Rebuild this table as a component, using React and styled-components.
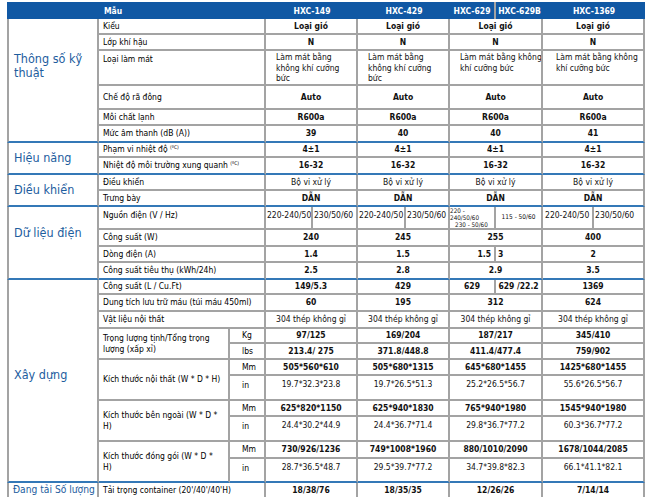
import React from "react";
import styled, { createGlobalStyle } from "styled-components";

const BLUE = "#1058a4";
const LINE = "#a3a3a3";
const SEP = "#3478b7";
const GROUP_TEXT = "#1d5d9e";

const GlobalStyle = createGlobalStyle`
  * { box-sizing: border-box; }
  body {
    margin: 0;
    background: #fff;
    font-family: "DejaVu Sans Condensed", "DejaVu Sans", sans-serif;
    font-stretch: condensed;
  }
`;

const Sheet = styled.table`
  margin: 2px 0 0 7px;
  width: 638px;
  table-layout: fixed;
  border-collapse: separate;
  border-spacing: 0;
  font-size: 8.5px;
  color: #111;
`;

const Row = styled.tr`
  height: ${p => p.$h}px;
  ${p => p.$end && `& > td { border-bottom-color: ${SEP}; }`}
`;

const Head = styled.th`
  background: ${BLUE};
  color: #fff;
  font-weight: bold;
  font-size: 8.5px;
  padding: 0 0 0 ${p => (p.$left ? "5px" : "0")};
  text-align: ${p => (p.$left ? "left" : "center")};
  border-right: ${p => (p.$divider ? `2px solid ${LINE}` : "none")};
  white-space: nowrap;
  overflow: hidden;
`;

const Cell = styled.td`
  border-right: 2px solid ${LINE};
  border-bottom: 2px solid ${LINE};
  padding: 0;
  line-height: 11px;
  white-space: nowrap;
  overflow: hidden;
`;

const Group = styled(Cell)`
  border-left: 2px solid ${LINE};
  border-bottom-color: ${SEP};
  color: ${GROUP_TEXT};
  font-size: ${p => p.$size || 12.5}px;
  line-height: 14px;
  white-space: ${p => (p.$nowrap ? "nowrap" : "normal")};
  padding: 0 0 ${p => p.$lift || 0}px ${p => p.$pl || 5}px;
  vertical-align: middle;
`;

const Label = styled(Cell)`
  color: #000;
  white-space: normal;
  padding: ${p => p.$pt || 0}px 2px 0 4px;
  vertical-align: ${p => (p.$pt ? "top" : "middle")};
  ${p => p.$end && `border-bottom-color: ${SEP};`}
`;

const Unit = styled(Cell)`
  color: #000;
  padding-left: 12px;
  vertical-align: ${p => (p.$pt ? "top" : "middle")};
  padding-top: ${p => p.$pt || 0}px;
`;

const Val = styled(Cell)`
  text-align: ${p => p.$align || "center"};
  font-weight: ${p => (p.$b ? "bold" : "normal")};
  vertical-align: ${p => (p.$pt !== undefined ? "top" : "middle")};
  padding: ${p => p.$pt || 0}px ${p => p.$pr || 0}px 0 ${p => p.$pl || 0}px;
  line-height: ${p => p.$lh || 11}px;
`;

const Tiny = styled.div`
  font-size: 6.3px;
  line-height: 7px;
  padding-left: ${p => p.$indent || 0}px;
`;

const TinyVal = styled(Val)`
  font-size: 6.5px;
`;

const Sup = styled.sup`
  font-size: 5px;
  vertical-align: 3px;
  line-height: 0;
`;

const Four = ({ v, ...rest }) =>
  v.map((x, i) => (
    <Val key={i} colSpan={2} {...rest}>
      {x}
    </Val>
  ));

const widths = [92, 131, 36, 47, 45, 48, 44, 46, 47, 51, 51];

const App = () => {
  return (
    <>
      <GlobalStyle />
      <Sheet>
        <colgroup>
          {widths.map((w, i) => (
            <col key={i} style={{ width: w }} />
          ))}
        </colgroup>
        <tbody>
          <Row $h={17}>
            <Head />
            <Head colSpan={2} $left>
              Mẫu
            </Head>
            <Head colSpan={2}>HXC-149</Head>
            <Head colSpan={2}>HXC-429</Head>
            <Head $divider>HXC-629</Head>
            <Head>HXC-629B</Head>
            <Head colSpan={2}>HXC-1369</Head>
          </Row>

          {/* Thông số kỹ thuật */}
          <Row $h={16}>
            <Group rowSpan={6} $lift={28}>
              Thông số kỹ thuật
            </Group>
            <Label colSpan={2}>Kiểu</Label>
            <Four v={["Loại gió", "Loại gió", "Loại gió", "Loại gió"]} $b />
          </Row>
          <Row $h={16}>
            <Label colSpan={2}>Lớp khí hậu</Label>
            <Four v={["N", "N", "N", "N"]} $b />
          </Row>
          <Row $h={35}>
            <Label colSpan={2} $pt={3}>
              Loại làm mát
            </Label>
            <Val colSpan={2} $align="left" $pl={10} $pt={1} $lh={10.6}>
              Làm mát bằng<br />không khí cưỡng<br />bức
            </Val>
            <Val colSpan={2} $align="left" $pl={10} $pt={1} $lh={10.6}>
              Làm mát bằng<br />không khí cưỡng<br />bức
            </Val>
            <Val colSpan={2} $align="left" $pl={10} $pt={1} $lh={10.6}>
              Làm mát bằng không<br />khí cưỡng bức
            </Val>
            <Val colSpan={2} $align="left" $pl={13} $pt={1} $lh={10.6}>
              Làm mát bằng không<br />khí cưỡng bức
            </Val>
          </Row>
          <Row $h={24}>
            <Label colSpan={2}>Chế độ rã đông</Label>
            <Four v={["Auto", "Auto", "Auto", "Auto"]} $b />
          </Row>
          <Row $h={16}>
            <Label colSpan={2}>Môi chất lạnh</Label>
            <Four v={["R600a", "R600a", "R600a", "R600a"]} $b />
          </Row>
          <Row $h={17} $end>
            <Label colSpan={2}>Mức âm thanh (dB (A))</Label>
            <Four v={["39", "40", "40", "41"]} $b />
          </Row>

          {/* Hiệu năng */}
          <Row $h={15}>
            <Group rowSpan={2}>Hiệu năng</Group>
            <Label colSpan={2}>
              Phạm vi nhiệt độ <Sup>(ºC)</Sup>
            </Label>
            <Four v={["4±1", "4±1", "4±1", "4±1"]} $b />
          </Row>
          <Row $h={17} $end>
            <Label colSpan={2}>
              Nhiệt độ môi trường xung quanh <Sup>(ºC)</Sup>
            </Label>
            <Four v={["16-32", "16-32", "16-32", "16-32"]} $b />
          </Row>

          {/* Điều khiển */}
          <Row $h={16}>
            <Group rowSpan={2}>Điều khiển</Group>
            <Label colSpan={2}>Điều khiển</Label>
            <Four v={["Bộ vi xử lý", "Bộ vi xử lý", "Bộ vi xử lý", "Bộ vi xử lý"]} />
          </Row>
          <Row $h={16} $end>
            <Label colSpan={2}>Trưng bày</Label>
            <Four v={["DẪN", "DẪN", "DẪN", "DẪN"]} $b />
          </Row>

          {/* Dữ liệu điện */}
          <Row $h={21}>
            <Group rowSpan={4} $lift={20}>
              Dữ liệu điện
            </Group>
            <Label colSpan={2} $pt={3}>
              Nguồn điện (V / Hz)
            </Label>
            <Val $align="left" $pl={1} $pt={3}>220-240/50</Val>
            <Val $align="left" $pl={1} $pt={3}>230/50/60</Val>
            <Val $align="left" $pl={1} $pt={3}>220-240/50</Val>
            <Val $align="left" $pl={1} $pt={3}>230/50/60</Val>
            <Val $align="left" $pt={0}>
              <Tiny>220 -</Tiny>
              <Tiny>240/50/60</Tiny>
              <Tiny $indent={5}>230 - 50/60</Tiny>
            </Val>
            <TinyVal $pt={5}>115 - 50/60</TinyVal>
            <Val $align="left" $pl={2} $pt={3}>220-240/50</Val>
            <Val $align="left" $pl={1} $pt={3}>230/50/60</Val>
          </Row>
          <Row $h={17}>
            <Label colSpan={2}>Công suất (W)</Label>
            <Four v={["240", "245", "255", "400"]} $b />
          </Row>
          <Row $h={16}>
            <Label colSpan={2}>Dòng điện (A)</Label>
            <Val colSpan={2} $b>1.4</Val>
            <Val colSpan={2} $b>1.5</Val>
            <Val $b $align="right" $pr={3}>1.5</Val>
            <Val $b $align="left" $pl={2}>3</Val>
            <Val colSpan={2} $b>2</Val>
          </Row>
          <Row $h={17} $end>
            <Label colSpan={2}>Công suất tiêu thụ (kWh/24h)</Label>
            <Four v={["2.5", "2.8", "2.9", "3.5"]} $b />
          </Row>

          {/* Xây dựng */}
          <Row $h={15}>
            <Group rowSpan={11} $lift={12}>
              Xây dựng
            </Group>
            <Label colSpan={2}>Công suất (L / Cu.Ft)</Label>
            <Val colSpan={2} $b>149/5.3</Val>
            <Val colSpan={2} $b>429</Val>
            <Val $b>629</Val>
            <Val $b>629 /22.2</Val>
            <Val colSpan={2} $b>1369</Val>
          </Row>
          <Row $h={17}>
            <Label colSpan={2}>Dung tích lưu trữ máu (túi máu 450ml)</Label>
            <Four v={["60", "195", "312", "624"]} $b />
          </Row>
          <Row $h={17}>
            <Label colSpan={2}>Vật liệu nội thất</Label>
            <Four
              v={["304 thép không gỉ", "304 thép không gỉ", "304 thép không gỉ", "304 thép không gỉ"]}
            />
          </Row>
          <Row $h={15}>
            <Label rowSpan={2}>Trọng lượng tịnh/Tổng trọng lượng (xấp xỉ)</Label>
            <Unit>Kg</Unit>
            <Four v={["97/125", "169/204", "187/217", "345/410"]} $b />
          </Row>
          <Row $h={16}>
            <Unit>lbs</Unit>
            <Four v={["213.4/ 275", "371.8/448.8", "411.4/477.4", "759/902"]} $b />
          </Row>
          <Row $h={16}>
            <Label rowSpan={2}>Kích thước nội thất (W * D * H)</Label>
            <Unit>Mm</Unit>
            <Four v={["505*560*610", "505*680*1315", "645*680*1455", "1425*680*1455"]} $b />
          </Row>
          <Row $h={25}>
            <Unit $pt={4}>in</Unit>
            <Four v={["19.7*32.3*23.8", "19.7*26.5*51.3", "25.2*26.5*56.7", "55.6*26.5*56.7"]} $pt={3} />
          </Row>
          <Row $h={16}>
            <Label rowSpan={2}>Kích thước bên ngoài (W * D * H)</Label>
            <Unit>Mm</Unit>
            <Four v={["625*820*1150", "625*940*1830", "765*940*1980", "1545*940*1980"]} $b />
          </Row>
          <Row $h={25}>
            <Unit $pt={4}>in</Unit>
            <Four v={["24.4*30.2*44.9", "24.4*36.7*71.4", "29.8*36.7*77.2", "60.3*36.7*77.2"]} $pt={3} />
          </Row>
          <Row $h={17}>
            <Label rowSpan={2} $end>
              Kích thước đóng gói (W * D *<br />H)
            </Label>
            <Unit>Mm</Unit>
            <Four v={["730/926/1236", "749*1008*1960", "880/1010/2090", "1678/1044/2085"]} $b />
          </Row>
          <Row $h={24} $end>
            <Unit $pt={4}>in</Unit>
            <Four v={["28.7*36.5*48.7", "29.5*39.7*77.2", "34.7*39.8*82.3", "66.1*41.1*82.1"]} $pt={3} />
          </Row>

          {/* Đang tải Số lượng */}
          <Row $h={15} $end>
            <Group $size={10.2} $pl={4} $nowrap>
              Đang tải Số lượng
            </Group>
            <Label colSpan={2}>Tải trọng container (20'/40'/40'H)</Label>
            <Four v={["18/38/76", "18/35/35", "12/26/26", "7/14/14"]} $b />
          </Row>
        </tbody>
      </Sheet>
    </>
  );
};

export default App;
